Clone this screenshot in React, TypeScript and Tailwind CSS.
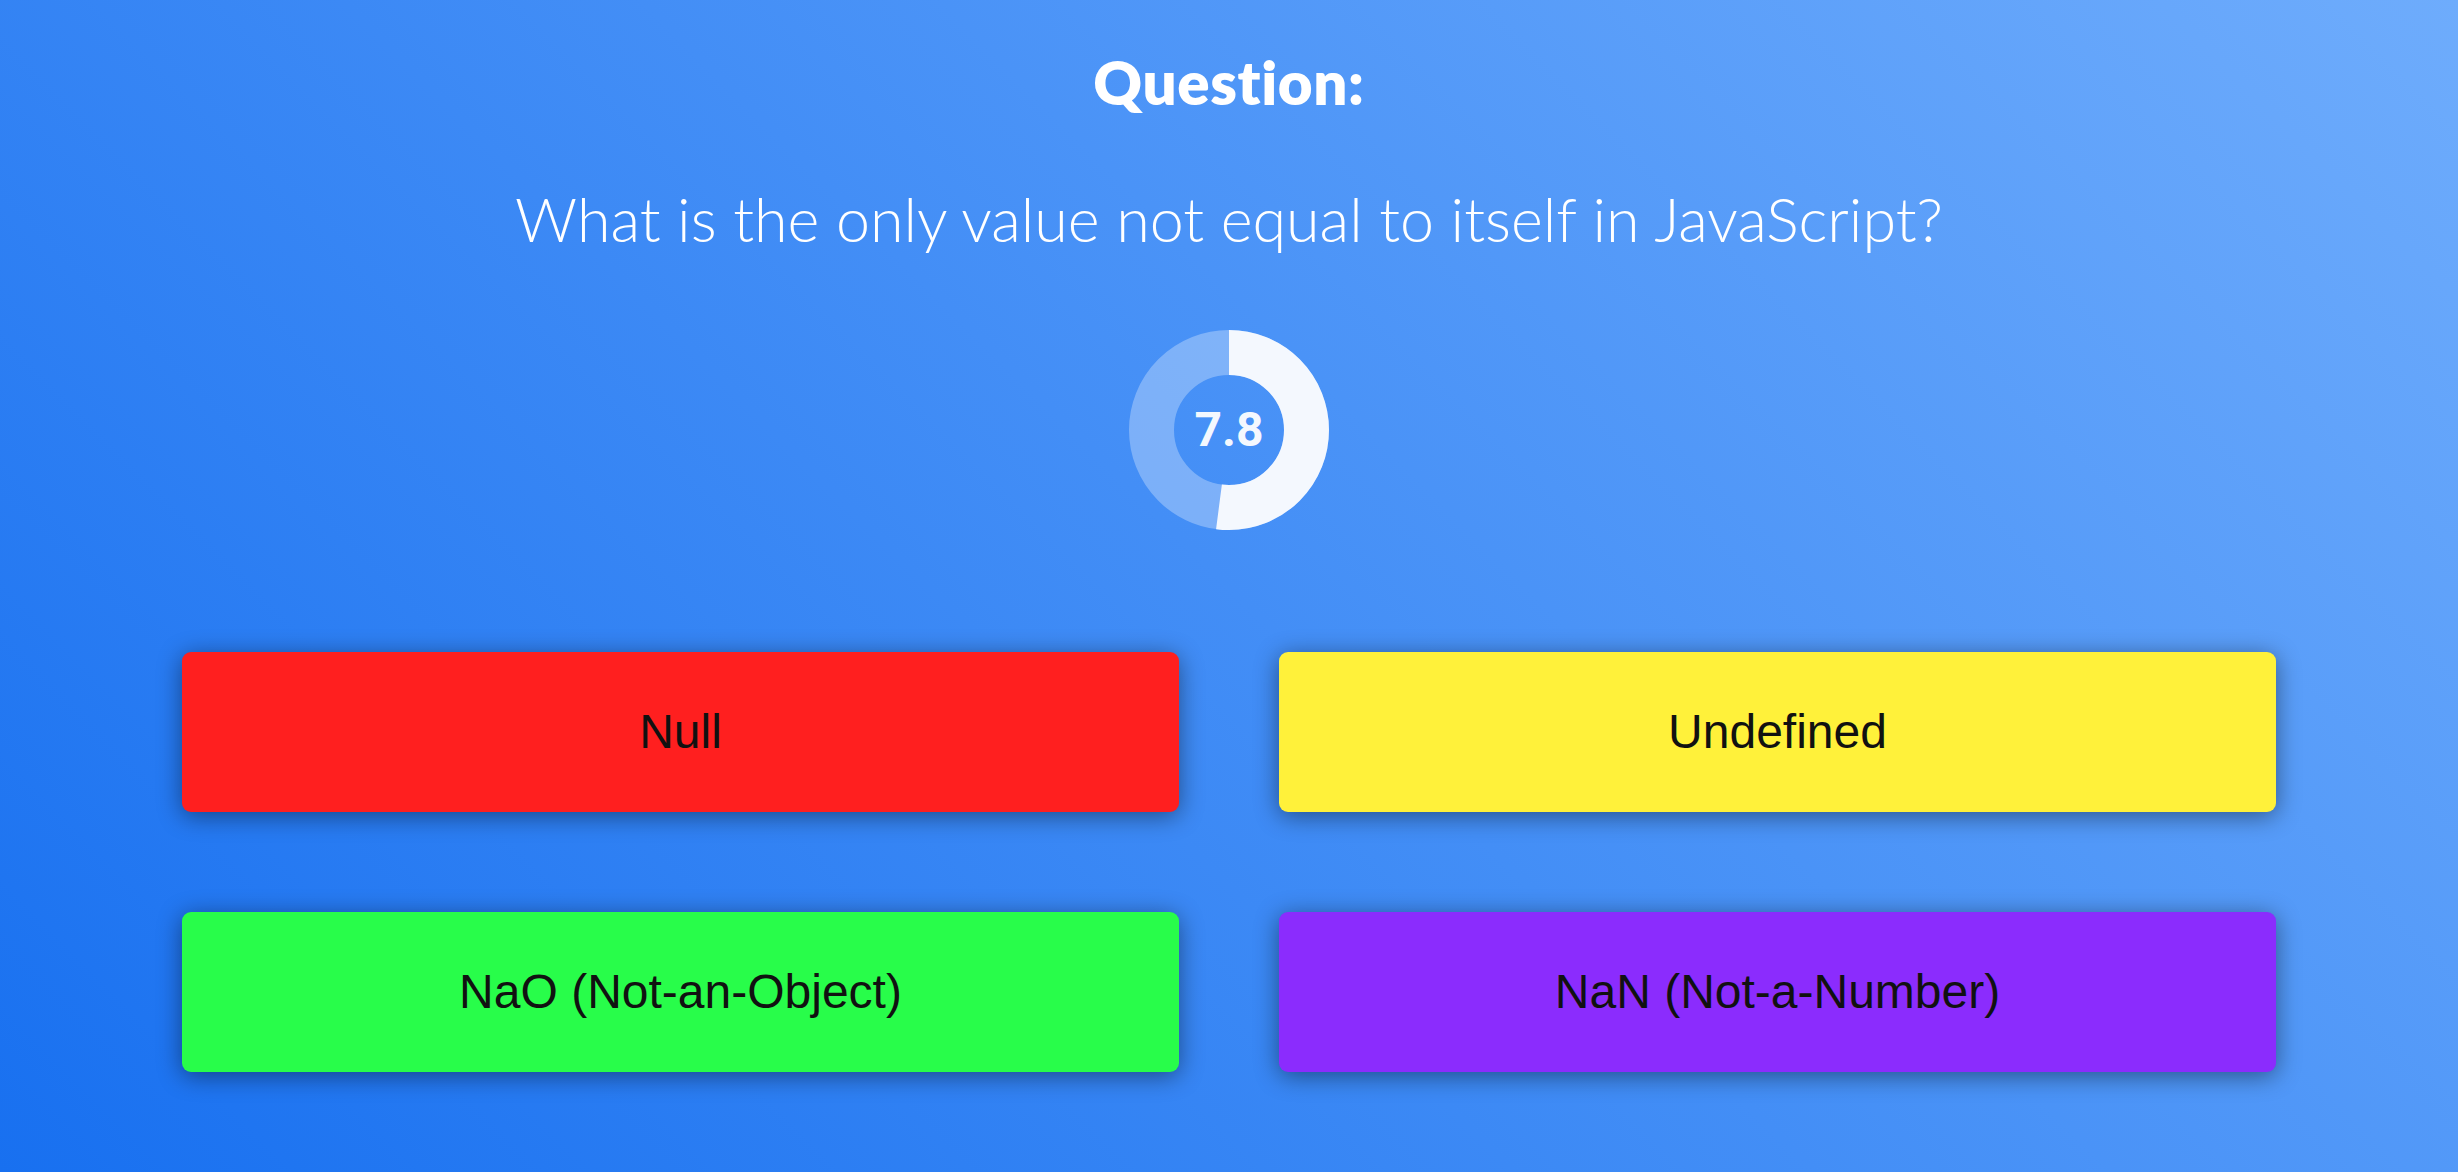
import React from 'react';

interface Answer {
  label: string;
  color: string;
}

const answers: Answer[] = [
  { label: 'Null', color: 'bg-[#ff1f1f]' },
  { label: 'Undefined', color: 'bg-[#fff13a]' },
  { label: 'NaO (Not-an-Object)', color: 'bg-[#28fd4a]' },
  { label: 'NaN (Not-a-Number)', color: 'bg-[#8b2cfd]' },
];

function Countdown({ seconds, total }: { seconds: number; total: number }) {
  const r = 77.5;
  const circ = 2 * Math.PI * r;
  const frac = seconds / total;
  return (
    <div className="relative w-[200px] h-[200px]">
      <svg width="200" height="200" viewBox="0 0 200 200">
        <circle cx="100" cy="100" r={r} fill="none" stroke="rgba(255,255,255,0.3)" strokeWidth="45" />
        <circle
          cx="100"
          cy="100"
          r={r}
          fill="none"
          stroke="#f4f8fe"
          strokeWidth="45"
          transform="rotate(-90 100 100)"
          style={{ strokeDasharray: `${circ * frac} ${circ}` }}
        />
      </svg>
      <div className="absolute inset-0 flex items-center justify-center font-[Roboto,sans-serif] font-bold text-[48px] text-[#f4f8fe]">
        {seconds}
      </div>
    </div>
  );
}

export default function App() {
  return (
    <div className="w-full h-screen flex flex-col items-center bg-[linear-gradient(45deg,#1870f0,#6eacfc)] font-['Lato',sans-serif] text-white">
      <h1 className="mt-[52px] text-[60px] leading-none font-extrabold tracking-[0.6px]">Question:</h1>
      <p className="mt-[76px] text-[61px] leading-none font-light">What is the only value not equal to itself in JavaScript?</p>
      <div className="mt-[81px]">
        <Countdown seconds={7.8} total={15} />
      </div>
      <div className="mt-[122px] w-full px-[182px] grid grid-cols-2 gap-x-[100px] gap-y-[100px]">
        {answers.map((a) => (
          <button
            key={a.label}
            className={`${a.color} h-[160px] rounded-[9px] shadow-[0_4px_24px_rgba(0,0,0,0.45)] flex items-center justify-center font-['Liberation_Sans',Arial,sans-serif] text-[48px] text-[#111]`}
          >
            {a.label}
          </button>
        ))}
      </div>
    </div>
  );
}
